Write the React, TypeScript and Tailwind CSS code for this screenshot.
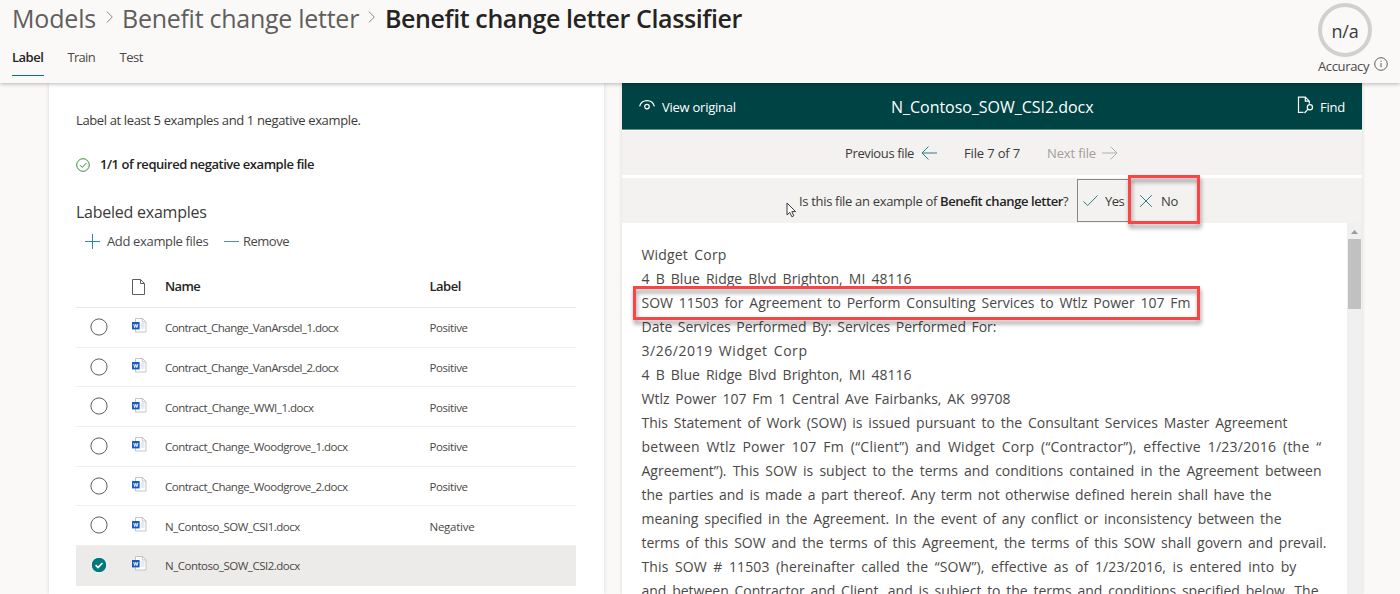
import type { ReactNode } from "react";
import clsx from "clsx";

type Row = { name: string; label: string; spacing: string; selected?: boolean };

const rows: Row[] = [
  { name: "Contract_Change_VanArsdel_1.docx", label: "Positive", spacing: "tracking-[-0.55px]" },
  { name: "Contract_Change_VanArsdel_2.docx", label: "Positive", spacing: "tracking-[-0.55px]" },
  { name: "Contract_Change_WWI_1.docx", label: "Positive", spacing: "tracking-[-0.48px]" },
  { name: "Contract_Change_Woodgrove_1.docx", label: "Positive", spacing: "tracking-[-0.49px]" },
  { name: "Contract_Change_Woodgrove_2.docx", label: "Positive", spacing: "tracking-[-0.49px]" },
  { name: "N_Contoso_SOW_CSI1.docx", label: "Negative", spacing: "tracking-[-0.49px]" },
  { name: "N_Contoso_SOW_CSI2.docx", label: "", spacing: "tracking-[-0.49px]", selected: true },
];

const lines: { text: string; width: string }[] = [
  { text: "Widget Corp", width: "w-[85px] tracking-[0.15px]" },
  { text: "4 B Blue Ridge Blvd Brighton, MI 48116", width: "w-[270px]" },
  { text: "SOW 11503 for Agreement to Perform Consulting Services to Wtlz Power 107 Fm", width: "w-[549px]" },
  { text: "Date Services Performed By: Services Performed For:", width: "w-[355px]" },
  { text: "3/26/2019 Widget Corp", width: "w-[166px] tracking-[0.55px]" },
  { text: "4 B Blue Ridge Blvd Brighton, MI 48116", width: "w-[270px]" },
  { text: "Wtlz Power 107 Fm 1 Central Ave Fairbanks, AK 99708", width: "w-[369px]" },
  { text: "This Statement of Work (SOW) is issued pursuant to the Consultant Services Master Agreement", width: "w-[646px]" },
  { text: "between Wtlz Power 107 Fm (“Client”) and Widget Corp (“Contractor”), effective 1/23/2016 (the “", width: "w-[680px] tracking-[0.25px]" },
  { text: "Agreement”). This SOW is subject to the terms and conditions contained in the Agreement between", width: "w-[680px]" },
  { text: "the parties and is made a part thereof. Any term not otherwise defined herein shall have the", width: "w-[630px]" },
  { text: "meaning specified in the Agreement. In the event of any conflict or inconsistency between the", width: "w-[640px]" },
  { text: "terms of this SOW and the terms of this Agreement, the terms of this SOW shall govern and prevail.", width: "w-[685px]" },
  { text: "This SOW # 11503 (hereinafter called the “SOW”), effective as of 1/23/2016, is entered into by", width: "w-[655px] tracking-[0.12px]" },
  { text: "and between Contractor and Client, and is subject to the terms and conditions specified below. The", width: "w-[677px]" },
];

function Stroke({ size, color, width = 1, className, children }: { size: number; color: string; width?: number; className?: string; children: ReactNode }) {
  return (
    <svg width={size} height={size} viewBox={`0 0 ${size} ${size}`} fill="none" stroke={color} strokeWidth={width} className={clsx("shrink-0", className)}>
      {children}
    </svg>
  );
}

function Crumb({ className }: { className: string }) {
  return (
    <svg width="8" height="12" viewBox="0 0 8 12" fill="none" stroke="#868482" strokeWidth="1" className={clsx("shrink-0", className)}>
      <path d="M1 .7 6.3 6 1 11.3" />
    </svg>
  );
}

function WordIcon() {
  return (
    <svg width="15" height="15" viewBox="0 0 15 15" className="-mt-[3px] shrink-0">
      <path d="M3.5.5h7l3.5 3.5v10H3.5z" fill="#fff" stroke="#b9b7b5" strokeWidth=".8" />
      <path d="M10.3.5V4H14" fill="none" stroke="#b9b7b5" strokeWidth=".8" />
      <path d="M8.5 6h4M8.5 8h4M8.5 10h4" stroke="#c9d3e0" strokeWidth=".9" />
      <rect x="0" y="4" width="7.6" height="7.4" fill="#185abd" />
      <path d="M1.7 6l1 3.6 1.1-3.3 1.1 3.3 1-3.6" fill="none" stroke="#fff" strokeWidth=".9" />
    </svg>
  );
}

function Header() {
  return (
    <header className="relative z-10 flex h-[83px] shrink-0 justify-between bg-[#faf9f8] shadow-[0_1px_4px_rgba(0,0,0,0.28)]">
      <div className="pl-3">
        <div className="flex h-[36px] items-center whitespace-nowrap text-[25px] leading-[36px] text-[#605e5c]">
          <span className="w-[94px] tracking-[-0.18px]">Models</span>
          <Crumb className="-mt-[2px]" />
          <span className="ml-2 w-[246px] tracking-[-0.27px]">Benefit change letter</span>
          <Crumb className="-mt-[2px]" />
          <span className="ml-[9px] font-semibold tracking-[-0.4px] text-[#252423]">Benefit change letter Classifier</span>
        </div>
        <nav className="flex pt-[11px] text-[13px] leading-[21px] text-[#4a4846]">
          <div className="h-[29px] w-[31.5px] border-b-[1.5px] border-[#03787c] font-semibold tracking-[-0.5px] text-[#252423]">Label</div>
          <div className="ml-6 w-[28px] tracking-[-0.7px]">Train</div>
          <div className="ml-6 tracking-[-0.5px]">Test</div>
        </nav>
      </div>
      <div className="flex w-[82px] flex-col pt-[3px]">
        <div className="flex h-[54px] w-[54px] items-center justify-center rounded-full border-[4px] border-[#d2d0ce] pt-[2px] text-[18px] tracking-[-0.2px] text-[#3b3a39]">n/a</div>
        <div className="flex h-[20px] items-center text-[13px] tracking-[-0.35px] text-[#4a4846]">
          <span className="w-[56px]">Accuracy</span>
          <Stroke size={14} color="#605e5c" className="-mt-[6px]">
            <circle cx="7" cy="7" r="6.3" />
            <path d="M7 6v4.2M7 3.7v1.2" />
          </Stroke>
        </div>
      </div>
    </header>
  );
}

function Examples() {
  return (
    <section className="h-full w-[555px] bg-white pl-[27px] shadow-[0_0_4px_rgba(0,0,0,0.14)]">
      <p className="pt-[28px] text-[13px] leading-[18px] tracking-[-0.37px] text-[#3b3a39]">Label at least 5 examples and 1 negative example.</p>
      <div className="mt-[27px] flex h-[18px] items-center text-[13px] font-semibold tracking-[-0.45px] text-[#252423]">
        <Stroke size={14} color="#3b8a3f" className="-mt-px mr-[10px]">
          <circle cx="7" cy="7" r="6.3" />
          <path d="M4 7.2 6.2 9.4 10.4 5" />
        </Stroke>
        1/1 of required negative example file
      </div>
      <h2 className="mt-[27px] text-[16px] leading-[22px] tracking-[-0.24px] text-[#3b3a39]">Labeled examples</h2>
      <div className="mt-[9px] flex h-[20px] items-center pl-[8.5px] text-[13px] text-[#4a4846]">
        <Stroke size={15} color="#2a8a96" className="-mt-px mr-[7.5px]">
          <path d="M7.500 0v15M0 7.500h15" />
        </Stroke>
        <span className="w-[117px] tracking-[-0.35px]">Add example files</span>
        <Stroke size={15} color="#4f8f96" className="-mt-px mr-[4px]">
          <path d="M0 7.500h15" />
        </Stroke>
        <span className="tracking-[-0.5px]">Remove</span>
      </div>
      <div className="mt-[15px] w-[500px]">
        <div className="flex h-[41px] items-center border-b border-[#e9e8e6] text-[13px] font-semibold text-[#252423]">
          <svg width="13" height="16" viewBox="0 0 13 16" fill="none" stroke="#605e5c" strokeWidth="1" className="-mt-px ml-[56px] mr-[20px] shrink-0">
            <path d="M.5.5h8l4 4v11H.5zM8.500.5v4h4" />
          </svg>
          <span className="w-[264.500px] tracking-[-0.6px]">Name</span>
          <span className="tracking-[-0.5px]">Label</span>
        </div>
        {rows.map((r) => (
          <div key={r.name} className={clsx("flex h-[39.7px] items-center border-b text-[11.5px] text-[#4a4846]", r.selected ? "border-transparent bg-[#edebe9]" : "border-[#f0efed]")}>
            <Stroke size={18} color="#605e5c" className="ml-[13.500px] mr-[24.500px] -mt-px">
              {r.selected ? (
                <>
                  <circle cx="9" cy="9" r="7.800" fill="#03787c" stroke="#fff" />
                  <path d="M5.600 9.200 8 11.500 12.400 7" stroke="#fff" strokeWidth="1.700" />
                </>
              ) : (
                <circle cx="9" cy="9" r="8.100" fill="#fff" />
              )}
            </Stroke>
            <WordIcon />
            <span className={clsx("ml-[18px] mt-px w-[264.500px]", r.spacing)}>{r.name}</span>
            <span className={clsx("mt-px", r.label === "Positive" ? "tracking-[-0.43px]" : "tracking-[-0.25px]")}>{r.label}</span>
          </div>
        ))}
      </div>
    </section>
  );
}

function Viewer() {
  return (
    <section className="flex h-full w-[740px] flex-col bg-white shadow-[0_0_4px_rgba(0,0,0,0.14)]">
      <div className="flex h-[47px] shrink-0 items-center border-b border-[#5f8c8c] bg-[#004344] pl-[17px] pt-px text-white">
        <Stroke size={16} color="#fff" width={1.2} className="mr-[7px] -mt-1">
          <path d="M.6 9.4C1.6 5.8 4.5 3.6 8 3.6s6.400 2.200 7.400 5.800" />
          <circle cx="8" cy="9.600" r="2.300" />
        </Stroke>
        <span className="w-[229px] pt-[2px] text-[13px] tracking-[-0.25px]">View original</span>
        <span className="w-[406px] text-[16px] leading-[22px] tracking-[-0.03px]">N_Contoso_SOW_CSI2.docx</span>
        <Stroke size={18} color="#fff" width={1.2} className="mr-[5px] -mt-[3px]">
          <path d="M6.500 16.400H1.500V1.200h6.800l4 4v2.600M8.300 1.200v4h4" />
          <circle cx="12.900" cy="11.300" r="2.600" />
          <path d="M11 13.200 7.500 17" />
        </Stroke>
        <span className="pt-[2px] text-[13px] tracking-[-0.25px]">Find</span>
      </div>
      <div className="mt-px flex h-[44px] shrink-0 items-center bg-[#f3f2f1] pl-[223px] text-[13px] text-[#3b3a39]">
        <span className="w-[76px] pt-px tracking-[-0.37px]">Previous file</span>
        <Stroke size={16} color="#2a7f82">
          <path d="M16 8H1M7.500 1.500 1 8l6.500 6.500" />
        </Stroke>
        <span className="ml-[27px] w-[83px] pt-px tracking-[-0.16px]">File 7 of 7</span>
        <span className="w-[55px] pt-px tracking-[-0.13px] text-[#a19f9d]">Next file</span>
        <Stroke size={16} color="#b3b0ad">
          <path d="M0 8h15M8.500 1.500 15 8l-6.500 6.500" />
        </Stroke>
      </div>
      <div className="relative z-10 mt-[3px] flex h-[45px] shrink-0 items-center bg-[#f3f2f1] pl-[177px] text-[13px] text-[#3b3a39]">
        <span className="w-[141px] pt-[2px] tracking-[-0.32px]">Is this file an example of</span>
        <span className="w-[137px] pt-[2px] tracking-[-0.42px]">
          <b className="font-semibold text-[#252423]">Benefit change letter</b>?
        </span>
        <div className="flex h-[43px] w-[52px] items-center border border-r-0 border-[#8a8886] pl-[5px]">
          <Stroke size={15} color="#2a7f82" className="mr-[7px]">
            <path d="M.5 8.500 4.700 12.500 14.500 2.500" />
          </Stroke>
          <span className="pt-[2px] tracking-[-0.55px]">Yes</span>
        </div>
        <div className="relative flex h-[43px] items-center pl-[10px]">
          <Stroke size={14} color="#2a7f82" className="mr-[8px]">
            <path d="M1.200 1.200 12.800 12.800M12.800 1.200 1.200 12.800" />
          </Stroke>
          <span className="pt-[2px] tracking-[-0.3px]">No</span>
          <div className="absolute -left-px -top-[4px] h-[49px] w-[72px] border-[3px] border-[#fb4444] [filter:drop-shadow(1px_4px_2px_rgba(0,0,0,0.4))]" />
        </div>
      </div>
      <div className="relative flex min-h-0 flex-1 bg-white">
        <div className="min-w-0 flex-1 overflow-hidden pl-[19.500px] pt-[19.500px] text-[14px] leading-[24.050px] text-[#4a4846]">
          {lines.map((l, i) => (
            <p key={i} className={clsx("whitespace-nowrap [text-align-last:justify]", l.width)}>
              {l.text}
            </p>
          ))}
        </div>
        <div className="flex w-[15px] shrink-0 flex-col items-center bg-[#f0f0f0] pt-[7px]">
          <svg width="7" height="4" viewBox="0 0 7 4" className="shrink-0">
            <path d="M0 4 3.500 0 7 4z" fill="#9b9b9b" />
          </svg>
          <div className="mt-[5px] h-[70px] w-[13px] bg-[#c1c1c1]" />
        </div>
        <div className="absolute left-[11px] top-[63px] h-[34px] w-[567px] border-[3px] border-[#fb4444] [filter:drop-shadow(1px_4px_2px_rgba(0,0,0,0.4))]" />
      </div>
    </section>
  );
}

export default function App() {
  return (
    <div className="relative flex h-[594px] w-[1400px] flex-col overflow-hidden bg-[#faf9f8] font-['Open_Sans',sans-serif]">
      <Header />
      <main className="flex min-h-0 flex-1 gap-[18px] pl-[49px]">
        <Examples />
        <Viewer />
      </main>
      <svg width="12" height="16" viewBox="0 0 12 16" className="absolute left-[786px] top-[202px] z-20">
        <path d="M1 1v12l2.800-2.600 2 4.300 2-.9-2-4.200H9.600z" fill="#fff" stroke="#3b3a39" strokeWidth="1" />
      </svg>
    </div>
  );
}
